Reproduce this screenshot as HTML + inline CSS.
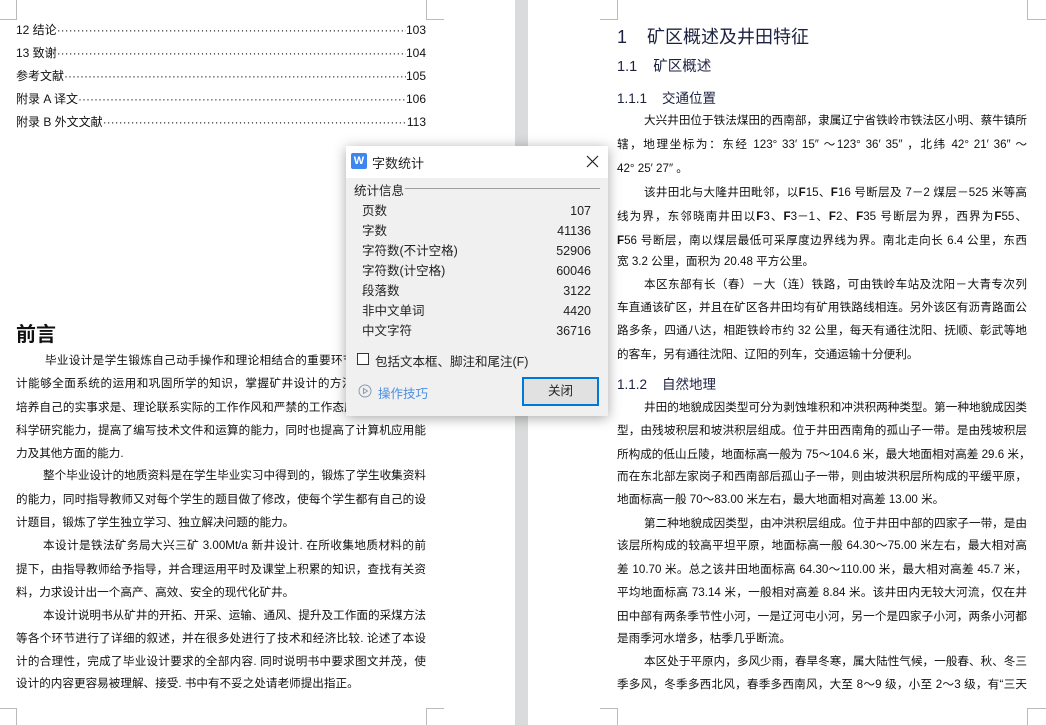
<!DOCTYPE html>
<html><head><meta charset="utf-8">
<style>
*{margin:0;padding:0;box-sizing:border-box}
body{width:1046px;height:725px;overflow:hidden;background:#fff;position:relative;font-family:"Liberation Sans","Noto Sans CJK SC","WenQuanYi Zen Hei",sans-serif;color:#111}
.gap{position:absolute;left:515px;top:0;width:13px;height:725px;background:#dadbdc}
.l{position:absolute;font-size:11.6px;line-height:18px;white-space:nowrap;text-align:justify;text-align-last:justify}
.lf{left:16px;width:410px}
.rt{left:617px;width:410px}
.nj{text-align-last:left}
.ind{padding-left:27px}
.toc{position:absolute;left:16px;width:410px;font-size:12px;line-height:16px;display:flex;white-space:nowrap}
.toc .d{flex:1;overflow:hidden;color:#333}
.cm{position:absolute;border-color:#bbb;border-style:solid;border-width:0}
.h{position:absolute;color:#1c2142;white-space:nowrap}
.dlg{position:absolute;left:346px;top:146px;width:262px;height:270px;background:#f0f0f0;box-shadow:0 2px 12px rgba(0,0,0,.35);font-size:12.5px;color:#222}
.dlg .t{height:32px;background:#fff;position:relative}
.row{position:absolute;left:16px;width:229px;display:flex;justify-content:space-between;line-height:16px;font-size:12.5px}
</style></head><body>
<div class="gap"></div>
<div class="cm" style="left:0;top:19px;width:16px;border-bottom-width:1px"></div>
<div class="cm" style="left:16px;top:0;height:20px;border-right-width:1px"></div>
<div class="cm" style="left:426px;top:0;height:20px;border-left-width:1px"></div>
<div class="cm" style="left:426px;top:19px;width:18px;border-bottom-width:1px"></div>
<div class="cm" style="left:0;top:708px;width:16px;border-top-width:1px"></div>
<div class="cm" style="left:16px;top:708px;height:17px;border-right-width:1px"></div>
<div class="cm" style="left:426px;top:708px;height:17px;border-left-width:1px"></div>
<div class="cm" style="left:426px;top:708px;width:18px;border-top-width:1px"></div>
<div class="cm" style="left:600px;top:19px;width:17px;border-bottom-width:1px"></div>
<div class="cm" style="left:617px;top:0;height:20px;border-right-width:1px"></div>
<div class="cm" style="left:1027px;top:0;height:20px;border-left-width:1px"></div>
<div class="cm" style="left:1027px;top:19px;width:19px;border-bottom-width:1px"></div>
<div class="cm" style="left:600px;top:708px;width:17px;border-top-width:1px"></div>
<div class="cm" style="left:617px;top:708px;height:17px;border-right-width:1px"></div>
<div class="cm" style="left:1027px;top:708px;height:17px;border-left-width:1px"></div>
<div class="cm" style="left:1027px;top:708px;width:19px;border-top-width:1px"></div>

<div class="toc" style="top:22px"><span>12 结论</span><span class="d">··························································································································</span><span>103</span></div>
<div class="toc" style="top:45px"><span>13 致谢</span><span class="d">··························································································································</span><span>104</span></div>
<div class="toc" style="top:68px"><span>参考文献</span><span class="d">··························································································································</span><span>105</span></div>
<div class="toc" style="top:91px"><span>附录 A 译文</span><span class="d">··························································································································</span><span>106</span></div>
<div class="toc" style="top:114px"><span>附录 B 外文文献</span><span class="d">··························································································································</span><span>113</span></div>

<div class="h" style="left:16px;top:318px;font-size:20px;font-weight:bold;color:#111">前言</div>
<div class="l lf" style="top:352px;padding-left:29px">毕业设计是学生锻炼自己动手操作和理论相结合的重要环节，通过毕业设</div>
<div class="l lf" style="top:375px">计能够全面系统的运用和巩固所学的知识，掌握矿井设计的方法和步骤，同时</div>
<div class="l lf" style="top:399px">培养自己的实事求是、理论联系实际的工作作风和严禁的工作态度，提高自己的</div>
<div class="l lf" style="top:422px">科学研究能力，提高了编写技术文件和运算的能力，同时也提高了计算机应用能</div>
<div class="l lf nj" style="top:445px">力及其他方面的能力.</div>
<div class="l lf ind" style="top:467px">整个毕业设计的地质资料是在学生毕业实习中得到的，锻炼了学生收集资料</div>
<div class="l lf" style="top:491px">的能力，同时指导教师又对每个学生的题目做了修改，使每个学生都有自己的设</div>
<div class="l lf nj" style="top:514px">计题目，锻炼了学生独立学习、独立解决问题的能力。</div>
<div class="l lf ind" style="top:537px">本设计是铁法矿务局大兴三矿 3.00Mt/a 新井设计. 在所收集地质材料的前</div>
<div class="l lf" style="top:561px">提下，由指导教师给予指导，并合理运用平时及课堂上积累的知识，查找有关资</div>
<div class="l lf nj" style="top:584px">料，力求设计出一个高产、高效、安全的现代化矿井。</div>
<div class="l lf ind" style="top:607px">本设计说明书从矿井的开拓、开采、运输、通风、提升及工作面的采煤方法</div>
<div class="l lf" style="top:630px">等各个环节进行了详细的叙述，并在很多处进行了技术和经济比较. 论述了本设</div>
<div class="l lf" style="top:653px">计的合理性，完成了毕业设计要求的全部内容. 同时说明书中要求图文并茂，使</div>
<div class="l lf nj" style="top:675px">设计的内容更容易被理解、接受. 书中有不妥之处请老师提出指正。</div>

<div class="h" style="left:617px;top:23px;font-size:18px">1&nbsp;&nbsp;&nbsp;&nbsp;矿区概述及井田特征</div>
<div class="h" style="left:617px;top:55px;font-size:14.5px">1.1&nbsp;&nbsp;&nbsp;&nbsp;矿区概述</div>
<div class="h" style="left:617px;top:87px;font-size:13.5px">1.1.1&nbsp;&nbsp;&nbsp;&nbsp;交通位置</div>
<div class="l rt ind" style="top:112px">大兴井田位于铁法煤田的西南部，隶属辽宁省铁岭市铁法区小明、蔡牛镇所</div>
<div class="l rt" style="top:136px">辖，地理坐标为：东经 123° 33′ 15″ ～123° 36′ 35″ ，北纬 42° 21′ 36″ ～</div>
<div class="l rt nj" style="top:160px">42° 25′ 27″ 。</div>
<div class="l rt ind" style="top:184px">该井田北与大隆井田毗邻，以<b>F</b>15、<b>F</b>16 号断层及 7－2 煤层－525 米等高</div>
<div class="l rt" style="top:208px">线为界，东邻晓南井田以<b>F</b>3、<b>F</b>3－1、<b>F</b>2、<b>F</b>35 号断层为界，西界为<b>F</b>55、</div>
<div class="l rt" style="top:232px"><b>F</b>56 号断层，南以煤层最低可采厚度边界线为界。南北走向长 6.4 公里，东西</div>
<div class="l rt nj" style="top:253px">宽 3.2 公里，面积为 20.48 平方公里。</div>
<div class="l rt ind" style="top:276px">本区东部有长（春）－大（连）铁路，可由铁岭车站及沈阳－大青专次列</div>
<div class="l rt" style="top:299px">车直通该矿区，并且在矿区各井田均有矿用铁路线相连。另外该区有沥青路面公</div>
<div class="l rt" style="top:322px">路多条，四通八达，相距铁岭市约 32 公里，每天有通往沈阳、抚顺、彰武等地</div>
<div class="l rt nj" style="top:346px">的客车，另有通往沈阳、辽阳的列车，交通运输十分便利。</div>
<div class="h" style="left:617px;top:373px;font-size:13.5px">1.1.2&nbsp;&nbsp;&nbsp;&nbsp;自然地理</div>
<div class="l rt ind" style="top:399px">井田的地貌成因类型可分为剥蚀堆积和冲洪积两种类型。第一种地貌成因类</div>
<div class="l rt" style="top:422px">型，由残坡积层和坡洪积层组成。位于井田西南角的孤山子一带。是由残坡积层</div>
<div class="l rt" style="top:446px">所构成的低山丘陵，地面标高一般为 75～104.6 米，最大地面相对高差 29.6 米，</div>
<div class="l rt" style="top:468px">而在东北部左家岗子和西南部后孤山子一带，则由坡洪积层所构成的平缓平原，</div>
<div class="l rt nj" style="top:491px">地面标高一般 70～83.00 米左右，最大地面相对高差 13.00 米。</div>
<div class="l rt ind" style="top:515px">第二种地貌成因类型，由冲洪积层组成。位于井田中部的四家子一带，是由</div>
<div class="l rt" style="top:537px">该层所构成的较高平坦平原，地面标高一般 64.30～75.00 米左右，最大相对高</div>
<div class="l rt" style="top:561px">差 10.70 米。总之该井田地面标高 64.30～110.00 米，最大相对高差 45.7 米，</div>
<div class="l rt" style="top:584px">平均地面标高 73.14 米，一般相对高差 8.84 米。该井田内无较大河流，仅在井</div>
<div class="l rt" style="top:608px">田中部有两条季节性小河，一是辽河屯小河，另一个是四家子小河，两条小河都</div>
<div class="l rt nj" style="top:630px">是雨季河水增多，枯季几乎断流。</div>
<div class="l rt ind" style="top:653px">本区处于平原内，多风少雨，春旱冬寒，属大陆性气候，一般春、秋、冬三</div>
<div class="l rt" style="top:676px">季多风，冬季多西北风，春季多西南风，大至 8～9 级，小至 2～3 级，有“三天</div>

<div class="dlg">
  <div class="t">
    <div style="position:absolute;left:5px;top:7px;width:16px;height:16px;background:#3d86f0;border-radius:2px;color:#fff;font-size:11px;line-height:16px;text-align:center;font-weight:bold">W</div>
    <div style="position:absolute;left:26px;top:7px;font-size:13px">字数统计</div>
    <svg style="position:absolute;left:240px;top:9px" width="13" height="13" viewBox="0 0 13 13"><path d="M1 1L12 12M12 1L1 12" stroke="#222" stroke-width="1.2"/></svg>
  </div>
  <div style="position:absolute;left:8px;top:34px;font-size:12.5px">统计信息</div>
  <div style="position:absolute;left:59px;top:42px;width:195px;border-top:1px solid #a0a0a0"></div>
  <div class="row" style="top:57px"><span>页数</span><span>107</span></div>
  <div class="row" style="top:77px"><span>字数</span><span>41136</span></div>
  <div class="row" style="top:97px"><span>字符数(不计空格)</span><span>52906</span></div>
  <div class="row" style="top:117px"><span>字符数(计空格)</span><span>60046</span></div>
  <div class="row" style="top:137px"><span>段落数</span><span>3122</span></div>
  <div class="row" style="top:157px"><span>非中文单词</span><span>4420</span></div>
  <div class="row" style="top:177px"><span>中文字符</span><span>36716</span></div>
  <div style="position:absolute;left:11px;top:207px;width:12px;height:12px;border:1px solid #333;background:#fff"></div>
  <div style="position:absolute;left:29px;top:205px;font-size:12.5px">包括文本框、脚注和尾注(F)</div>
  <svg style="position:absolute;left:12px;top:238px" width="14" height="14" viewBox="0 0 14 14"><circle cx="7" cy="7" r="6" fill="none" stroke="#8a9bb0" stroke-width="1"/><path d="M5.5 4.5L9.5 7L5.5 9.5Z" fill="none" stroke="#8a9bb0"/></svg>
  <div style="position:absolute;left:32px;top:237px;font-size:12.5px;color:#4a8fe0">操作技巧</div>
  <div style="position:absolute;left:176px;top:231px;width:77px;height:29px;border:2px solid #0078d7;background:#e1e1e1;text-align:center;line-height:25px;font-size:12.5px">关闭</div>
</div>
</body></html>
